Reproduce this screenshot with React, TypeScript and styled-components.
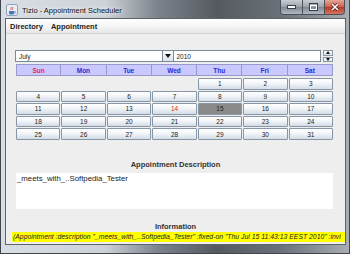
import React from 'react'
import styled, { createGlobalStyle } from 'styled-components'

const days = ['Sun', 'Mon', 'Tue', 'Wed', 'Thu', 'Fri', 'Sat']
// July 2010 starts on a Thursday
const cells: (number | null)[] = [null, null, null, null, ...Array.from({ length: 31 }, (_, i) => i + 1)]
const info =
  '(Appointment :description "_meets_with_..Softpedia_Tester" :fixed-on "Thu Jul 15 11:43:13 EEST 2010" :invi'

const App = () => {
  return (
    <>
      <Global />
      <Frame>
        <TitleBar>
          <AppIcon viewBox="0 0 12 12">
            <rect x="0.5" y="0.5" width="11" height="11" rx="1.5" fill="#e8eef6" stroke="#8fa3bb" />
            <path d="M3 7h5v2.2a1.3 1.3 0 0 1-1.3 1.3H4.3A1.3 1.3 0 0 1 3 9.2z" fill="#4a78b5" />
            <path d="M8 7.6h.8a.8.8 0 0 1 0 1.6H8" fill="none" stroke="#4a78b5" strokeWidth="0.7" />
            <path d="M5 6c-.8-1 .8-1.6 0-3M6.6 6c-.8-1 .8-1.6 0-3" fill="none" stroke="#d9442b" strokeWidth="0.8" />
          </AppIcon>
          <Title>Tizio - Appointment Scheduler</Title>
          <Controls>
            <CtrlButton>
              <svg width="9" height="4" viewBox="0 0 9 4"><rect x="0.5" y="0.5" width="8" height="3" fill="#fff" stroke="#3a3f46" /></svg>
            </CtrlButton>
            <CtrlButton>
              <svg width="9" height="8" viewBox="0 0 9 8"><rect x="0.5" y="0.5" width="8" height="7" fill="none" stroke="#3a3f46" /><rect x="1.5" y="2.5" width="6" height="4" fill="none" stroke="#fff" /></svg>
            </CtrlButton>
            <CloseButton>
              <svg width="10" height="8" viewBox="0 0 10 8"><path d="M2 1l6 6M8 1L2 7" stroke="#5a1a12" strokeWidth="3" /><path d="M2 1l6 6M8 1L2 7" stroke="#fff" strokeWidth="1.6" /></svg>
            </CloseButton>
          </Controls>
        </TitleBar>
        <Body>
          <MenuBar>
            <MenuItem>Directory</MenuItem>
            <MenuItem>Appointment</MenuItem>
          </MenuBar>
          <Calendar>
            <PickerRow>
              <Combo>
                <ComboText>July</ComboText>
                <ArrowButton>
                  <Triangle />
                </ArrowButton>
              </Combo>
              <YearField>2010</YearField>
              <Spinner>
                <SpinButton><SmallTri $up /></SpinButton>
                <SpinButton><SmallTri /></SpinButton>
              </Spinner>
            </PickerRow>
            <DayHeader>
              {days.map((d) => (
                <DayName key={d} $sunday={d === 'Sun'}>{d}</DayName>
              ))}
            </DayHeader>
            <DayGrid>
              {cells.map((n, i) =>
                n === null ? (
                  <Empty key={i} />
                ) : (
                  <DayCell key={i} $today={n === 14} $selected={n === 15}>{n}</DayCell>
                )
              )}
            </DayGrid>
          </Calendar>
          <SectionLabel>Appointment Description</SectionLabel>
          <TextArea>_meets_with_..Softpedia_Tester</TextArea>
          <SectionLabel $tight>Information</SectionLabel>
          <InfoLine>{info}</InfoLine>
        </Body>
      </Frame>
    </>
  )
}

export default App

const Global = createGlobalStyle`
body{
  margin: 0;
  background: #ffffff;
}
*{
  box-sizing: border-box;
}
`
const Frame = styled.div`
width: 350px;
height: 254px;
overflow: hidden;
display: flex;
flex-direction: column;
padding: 0 3px 8px 4px;
font-family: "Liberation Sans", Arial, sans-serif;
background: linear-gradient(to right, #d9dee4 0%, #cdd2d8 30%, #7d838b 45%, #555a61 62%, #6a7077 80%, #a7adb3 100%);
border-left: 1px solid #40454c;
border-right: 1px solid #40454c;
border-bottom: 1px solid #40454c;
`
const TitleBar = styled.div`
height: 18px;
flex-shrink: 0;
display: flex;
align-items: flex-start;
`
const AppIcon = styled.svg`
width: 12px;
height: 12px;
margin: 4px 4px 0 1px;
`
const Title = styled.div`
font-size: 7.5px;
color: #111;
margin-top: 6px;
text-shadow: 0 0 4px #ffffff, 0 0 6px #ffffff;
white-space: nowrap;
`
const Controls = styled.div`
margin-left: auto;
display: flex;
height: 15px;
margin-right: 1px;
border: 1px solid #4a5058;
border-top: none;
border-radius: 0 0 4px 4px;
overflow: hidden;
`
const CtrlButton = styled.div`
width: 22px;
display: flex;
align-items: center;
justify-content: center;
background: linear-gradient(#c9ced5, #9aa1aa 50%, #7f8791 51%, #b2b9c1);
border-right: 1px solid #4a5058;
`
const CloseButton = styled(CtrlButton)`
width: 19px;
border-right: none;
background: linear-gradient(#e6a496, #c9604c 50%, #b23a25 51%, #d8735d);
`
const Body = styled.div`
flex: 1;
background: #eeeeee;
display: flex;
flex-direction: column;
border: 1px solid #5c636b;
`
const MenuBar = styled.div`
height: 15px;
flex-shrink: 0;
display: flex;
align-items: center;
gap: 8px;
padding-left: 4px;
background: linear-gradient(#ffffff, #f3f3f3 60%, #e6e6e6);
border-bottom: 1px solid #d4d4d4;
`
const MenuItem = styled.div`
font-size: 7.5px;
font-weight: bold;
color: #222;
`
const Calendar = styled.div`
display: flex;
flex-direction: column;
padding: 0 12px 0 9px;
margin-top: 16px;
`
const PickerRow = styled.div`
display: flex;
height: 12px;
`
const Combo = styled.div`
width: 161px;
display: flex;
border: 1px solid #7a8a99;
background: #ffffff;
`
const ComboText = styled.div`
flex: 1;
font-size: 6.5px;
color: #222;
padding: 2px 0 0 3px;
`
const ArrowButton = styled.div`
width: 11px;
display: flex;
align-items: center;
justify-content: center;
border-left: 1px solid #7a8a99;
background: linear-gradient(#ffffff, #dce3ea);
`
const Triangle = styled.div`
width: 0;
height: 0;
border-left: 3.5px solid transparent;
border-right: 3.5px solid transparent;
border-top: 4px solid #111;
`
const YearField = styled.div`
width: 148px;
font-size: 6.5px;
color: #222;
padding: 2px 0 0 2px;
background: #ffffff;
border: 1px solid #7a8a99;
border-left: none;
`
const Spinner = styled.div`
width: 10px;
margin-left: 2px;
display: flex;
flex-direction: column;
gap: 1px;
`
const SpinButton = styled.div`
flex: 1;
display: flex;
align-items: center;
justify-content: center;
border: 1px solid #8a98a6;
background: linear-gradient(#ffffff, #dde4eb);
`
const SmallTri = styled.div<{ $up?: boolean }>`
width: 0;
height: 0;
border-left: 2.5px solid transparent;
border-right: 2.5px solid transparent;
${({ $up }) => ($up ? 'border-bottom: 3px solid #111;' : 'border-top: 3px solid #111;')}
`
const DayHeader = styled.div`
display: grid;
grid-template-columns: repeat(7, 1fr);
height: 12px;
margin: 2px 0 0 1px;
`
const DayName = styled.div<{ $sunday?: boolean }>`
display: flex;
align-items: center;
justify-content: center;
font-size: 6.5px;
font-weight: bold;
color: ${({ $sunday }) => ($sunday ? '#f02840' : '#2b2bd8')};
background: #c9c9ff;
border: 1px solid #9a9ac8;
border-left: none;
&:first-child{
  border-left: 1px solid #9a9ac8;
}
`
const DayGrid = styled.div`
display: grid;
grid-template-columns: repeat(7, 1fr);
grid-auto-rows: 11.6px;
gap: 1px 1px;
margin: 2px 0 0 1px;
`
const Empty = styled.div``
const DayCell = styled.div<{ $today?: boolean; $selected?: boolean }>`
display: flex;
align-items: center;
justify-content: center;
font-size: 6.5px;
color: ${({ $today }) => ($today ? '#f02020' : '#222')};
border: 1px solid #8797a7;
border-radius: 1px;
background: ${({ $selected }) => ($selected ? '#8a8a8a' : 'linear-gradient(#ffffff, #f2f5f8 45%, #d3dce6)')};
`
const SectionLabel = styled.div<{ $tight?: boolean }>`
text-align: center;
font-size: 7.5px;
font-weight: bold;
color: #333;
margin-top: ${({ $tight }) => ($tight ? '13px' : '20px')};
line-height: 9px;
`
const TextArea = styled.div`
margin: 4px 12px 0 10px;
height: 36px;
background: #ffffff;
font-size: 7.8px;
color: #222;
padding: 1px 0 0 1px;
`
const InfoLine = styled.div`
margin: 1px 0 0 6px;
height: 10px;
background: #ffff00;
font-size: 6.85px;
font-style: italic;
color: #222;
white-space: nowrap;
overflow: hidden;
padding: 1px 0 0 1px;
line-height: 8px;
`
